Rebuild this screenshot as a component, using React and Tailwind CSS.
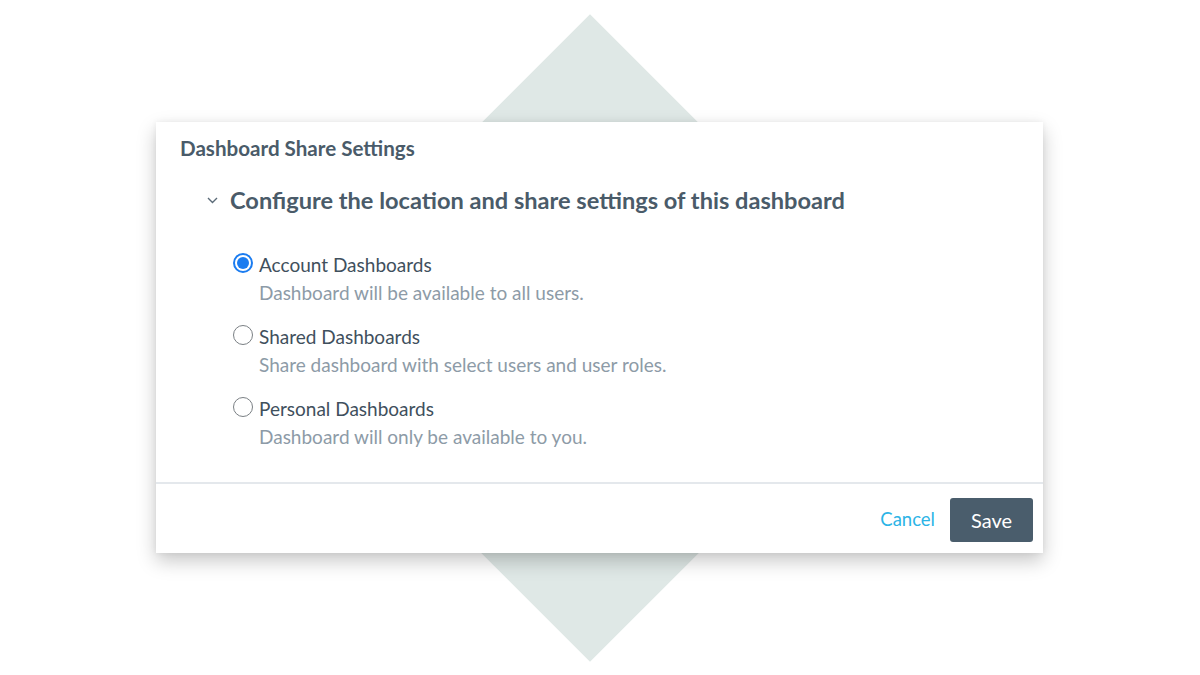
// 대시보드 공유 설정 모달 — 배경 다이아몬드 위에 카드
const options = [
  { label: 'Account Dashboards', desc: 'Dashboard will be available to all users.', checked: true },
  { label: 'Shared Dashboards', desc: 'Share dashboard with select users and user roles.' },
  { label: 'Personal Dashboards', desc: 'Dashboard will only be available to you.' },
]

function Radio({ checked }) {
  return checked ? (
    <span className="grid h-[20px] w-[20px] shrink-0 place-items-center rounded-full border-2 border-[#1b7cf0] bg-white">
      <span className="block h-[12px] w-[12px] rounded-full bg-[#1b7cf0]" />
    </span>
  ) : (
    <span className="block h-[20px] w-[20px] shrink-0 rounded-full border-[1.5px] border-[#7a7f84] bg-white" />
  )
}

export default function App() {
  return (
    <div className="relative h-[675px] w-[1200px] overflow-hidden bg-white font-['Lato','Noto_Sans',sans-serif]">
      <div className="absolute left-[361px] top-[109px] h-[458px] w-[458px] rotate-45 bg-[#dfe8e6]" />

      <div className="relative pl-[156px] pt-[122px]">
        <div className="flex h-[431px] w-[887px] flex-col bg-white shadow-[0_8px_18px_rgba(0,0,0,0.22),0_0_6px_rgba(0,0,0,0.06)]">
          <div className="flex-1 pl-[24px] pt-[13px]">
            <h2 className="text-[20.6px] font-bold leading-[26px] text-[#4a5b69]">Dashboard Share Settings</h2>

            <div className="mt-[24px] flex items-center pl-[27px]">
              <svg width="11" height="7" viewBox="0 0 11 7" className="mr-[12px]" aria-hidden="true">
                <path d="M1 1l4.5 4.5L10 1" fill="none" stroke="#5b6b78" strokeWidth="1.4" />
              </svg>
              <h3 className="text-[23.6px] font-bold leading-[30px] text-[#4a5b69]">
                Configure the location and share settings of this dashboard
              </h3>
            </div>

            <div className="mt-[37px] flex flex-col gap-[18px] pl-[53px]">
              {options.map((o) => (
                <label key={o.label} className="flex items-start gap-[6px]">
                  <span className="mt-[1px] block"><Radio checked={o.checked} /></span>
                  <span className="flex flex-col">
                    <span className="text-[19px] leading-[26px] text-[#3f505d]">{o.label}</span>
                    <span className="mt-[2px] text-[19px] leading-[26px] text-[#8d9ba7]">{o.desc}</span>
                  </span>
                </label>
              ))}
            </div>
          </div>

          <div className="flex h-[71px] items-center justify-end gap-[15px] border-t-2 border-[#e4e8ec] pr-[10px] pt-[3px]">
            <button className="text-[18.5px] text-[#2cb4e6]">Cancel</button>
            <button className="h-[44px] w-[83px] rounded-[3px] bg-[#4a5d6c] text-[20px] text-white">Save</button>
          </div>
        </div>
      </div>
    </div>
  )
}
